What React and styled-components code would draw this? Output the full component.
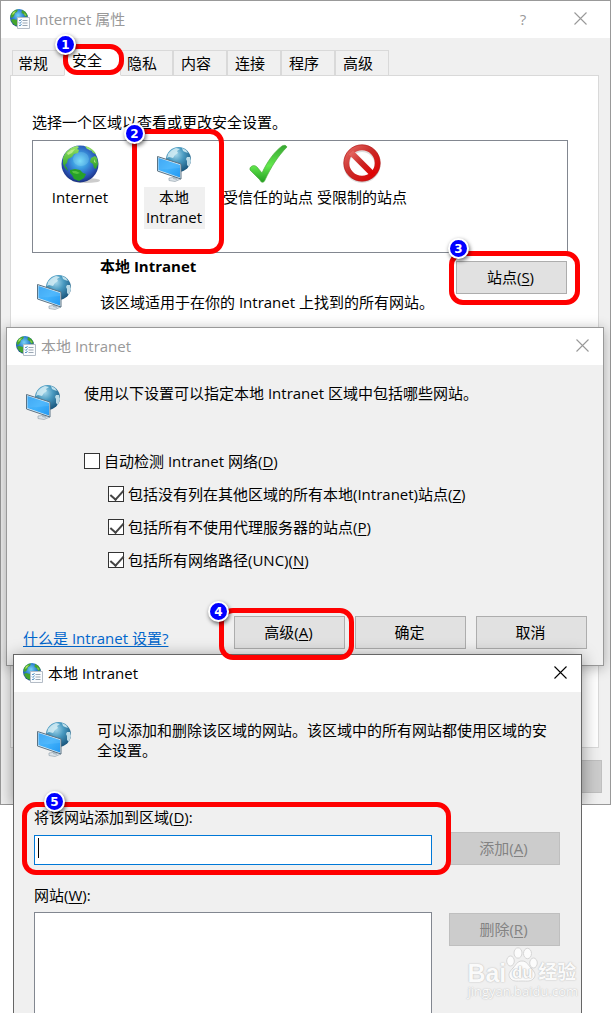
import React from 'react';
import styled, {createGlobalStyle} from 'styled-components';

const GlobalStyle = createGlobalStyle`
*{
    box-sizing:border-box;
}
body{
    margin:0;
    background:#ffffff;
    color:#000000;
    font-family:"Open Sans","Noto Sans CJK SC",sans-serif;
    font-size:15px;
    line-height:20px;
}
button,input{
    font:inherit;
    color:inherit;
}
u{
    text-underline-offset:2px;
    text-decoration-thickness:1px;
}
`

const zones = [
    {name: 'Internet', icon: <GlobeIcon />},
    {name: '本地 Intranet', icon: <NetworkIcon />, selected: true},
    {name: '受信任的站点', icon: <TickIcon />},
    {name: '受限制的站点', icon: <BlockedIcon />},
];

const tabs = ['常规', '安全', '隐私', '内容', '连接', '程序', '高级'];

const options = [
    {id: 'detect', text: '自动检测 Intranet 网络', hotkey: 'D', checked: false},
    {id: 'local', text: '包括没有列在其他区域的所有本地(Intranet)站点', hotkey: 'Z', checked: true},
    {id: 'proxy', text: '包括所有不使用代理服务器的站点', hotkey: 'P', checked: true},
    {id: 'unc', text: '包括所有网络路径(UNC)', hotkey: 'N', checked: true},
];

export default function App() {
    return (
        <Desktop>
            <GlobalStyle />
            <PropertiesWindow />
            <IntranetWindow />
            <SitesWindow />
        </Desktop>
    )
}

function PropertiesWindow() {
    return (
        <MainWindow>
            <WindowTitle title="Internet 属性" help />
            <PropertiesBody>
                <TabBar role="tablist">
                    {tabs.map((tab) => (
                        <Tab key={tab} role="tab" $active={tab === '安全'} aria-selected={tab === '安全'}>
                            {tab}
                            {tab === '安全' && <Callout number="1" $inset="-5px -4px 0 -2px" $top="-15px" $left="-13px" />}
                        </Tab>
                    ))}
                </TabBar>
                <TabPanel role="tabpanel">
                    <div>选择一个区域以查看或更改安全设置。</div>
                    <ZoneList>
                        {zones.map((zone) => (
                            <Zone key={zone.name}>
                                <ZoneIcon>{zone.icon}</ZoneIcon>
                                <ZoneName $selected={zone.selected}>{zone.name}</ZoneName>
                                {zone.selected && <Callout number="2" $inset="-12px -3px -2px 5px" $top="-11px" $left="-13px" />}
                            </Zone>
                        ))}
                    </ZoneList>
                    <ZoneInfo>
                        <SideIcon><NetworkIcon /></SideIcon>
                        <ZoneText>
                            <strong>本地 Intranet</strong>
                            <span>该区域适用于在你的 Intranet 上找到的所有网站。</span>
                        </ZoneText>
                        <SitesButton>
                            <Button>站点(<u>S</u>)</Button>
                            <Callout number="3" $inset="-10px -13px -11px -7px" $top="-18px" $left="-6px" />
                        </SitesButton>
                    </ZoneInfo>
                </TabPanel>
                <Footer>
                    <Button disabled aria-label="应用" />
                </Footer>
            </PropertiesBody>
        </MainWindow>
    )
}

function IntranetWindow() {
    return (
        <SettingsWindow>
            <WindowTitle title="本地 Intranet" />
            <SettingsBody>
                <SettingsIntro>
                    <IntroIcon><NetworkIcon /></IntroIcon>
                    <span>使用以下设置可以指定本地 Intranet 区域中包括哪些网站。</span>
                </SettingsIntro>
                <Options>
                    {options.map((option, i) => (
                        <Option key={option.id} $nested={i > 0}>
                            <Checkbox type="checkbox" defaultChecked={option.checked} />
                            <span>{option.text}(<u>{option.hotkey}</u>)</span>
                        </Option>
                    ))}
                </Options>
                <SettingsFooter>
                    <HelpLink href="#help">什么是 Intranet 设置?</HelpLink>
                    <Buttons>
                        <Holder>
                            <Button>高级(<u>A</u>)</Button>
                            <Callout number="4" $inset="-8px -9px -11px -15px" $top="-12px" $left="-16px" />
                        </Holder>
                        <Button>确定</Button>
                        <Button>取消</Button>
                    </Buttons>
                </SettingsFooter>
            </SettingsBody>
        </SettingsWindow>
    )
}

function SitesWindow() {
    return (
        <FrontWindow>
            <WindowTitle title="本地 Intranet" active />
            <SitesBody>
                <SitesIntro>
                    <IntroIcon><NetworkIcon /></IntroIcon>
                    <span>可以添加和删除该区域的网站。该区域中的所有网站都使用区域的安全设置。</span>
                </SitesIntro>
                <AddRow>
                    <Field>
                        <label htmlFor="site">将该网站添加到区域(<u>D</u>):</label>
                        <InputWrap>
                            <SiteInput id="site" type="text" />
                            <Caret />
                        </InputWrap>
                        <Callout number="5" $inset="-5px -19px -10px -12px" $top="-16px" $left="17px" />
                    </Field>
                    <Button disabled>添加(<u>A</u>)</Button>
                </AddRow>
                <SitesRow>
                    <SitesList>
                        <span id="sites-label">网站(<u>W</u>):</span>
                        <ListBox role="listbox" aria-labelledby="sites-label" />
                    </SitesList>
                    <RemoveButton disabled>删除(<u>R</u>)</RemoveButton>
                </SitesRow>
                <Watermark>
                    <WatermarkLogo>
                        <span>Bai</span>
                        <Paw><PawIcon /><PawText>du</PawText></Paw>
                        <WatermarkName>经验</WatermarkName>
                    </WatermarkLogo>
                    <WatermarkUrl>jingyan.baidu.com</WatermarkUrl>
                </Watermark>
            </SitesBody>
        </FrontWindow>
    )
}

function WindowTitle({title, active, help}) {
    return (
        <TitleBar $active={active} $help={help}>
            <TitleIcon />
            <TitleText>{title}</TitleText>
            {help && <TitleButton aria-label="帮助">?</TitleButton>}
            <TitleButton aria-label="关闭">
                <svg width="13" height="13" viewBox="0 0 13 13" fill="none" stroke="currentColor" strokeWidth="1.1">
                    <path d="M.5.5l12 12M12.5.5l-12 12" />
                </svg>
            </TitleButton>
        </TitleBar>
    )
}

function Callout({number, $inset, $top, $left}) {
    return (
        <Ring $inset={$inset}>
            <Badge $top={$top} $left={$left}>{number}</Badge>
        </Ring>
    )
}

function TitleIcon() {
    return (
        <svg width="20" height="20" viewBox="0 0 20 20">
            <defs>
                <radialGradient id="smallGlobe" cx=".45" cy=".35" r=".65">
                    <stop offset="0" stopColor="#79d3f5" />
                    <stop offset=".5" stopColor="#2b7fd0" />
                    <stop offset="1" stopColor="#173d83" />
                </radialGradient>
            </defs>
            <circle cx="9" cy="9" r="9" fill="url(#smallGlobe)" />
            <path d="M1 5c2-3 4-4.500 7-4.500L7 3 5 4 4 7 2 9 .5 8zM12 1c3 1 5 3 5.500 6l-2 1-2-3-2-1zM3 10l4 1 2 2-1 4c-3 0-6-3-7-6z" fill="#45a52e" />
            <path d="M3 3l3-1-2 3-2 1zM14 4l2 2-1 1z" fill="#a9dc60" />
            <path d="M7.500 8.500h12v11h-12z" fill="#fafcfe" stroke="#b4bcc6" />
            <path d="M12.500 11.500h5M12.500 14h5M12.500 16.500h5" stroke="#9ba7b4" />
            <path d="M9 11l1 1 1.500-2M9 13.500l1 1 1.500-2M9 16l1 1 1.500-2" fill="none" stroke="#2e7ab9" strokeWidth=".8" />
        </svg>
    )
}

function GlobeIcon() {
    return (
        <svg width="40" height="40" viewBox="-1 0 40 40">
            <defs>
                <radialGradient id="globe" cx=".5" cy=".42" r=".58">
                    <stop offset="0" stopColor="#6fd6f7" />
                    <stop offset=".35" stopColor="#3c9be0" />
                    <stop offset=".75" stopColor="#2a56b8" />
                    <stop offset="1" stopColor="#1a2f80" />
                </radialGradient>
                <linearGradient id="land" x1="0" y1="0" x2="0" y2="1">
                    <stop offset="0" stopColor="#9be36a" />
                    <stop offset=".5" stopColor="#5cc043" />
                    <stop offset="1" stopColor="#1f9425" />
                </linearGradient>
            </defs>
            <ellipse cx="25" cy="36.500" rx="14" ry="2.500" fill="#000" opacity=".2" />
            <circle cx="19" cy="20" r="18.500" fill="url(#globe)" />
            <path d="M2 14C4 8 9 3 16 2l2 1-2 2 2 1-1 3-4 1-2 3-4 2-1 4-2 2 2 3 1 3-3-3-2-4zM24 2c5 1 9 4 11 8l-3-1-2-3-4-1zM30 14l4-2 2 2 1 6-2 5-2-1-1-4-3-2z" fill="url(#land)" />
            <path d="M9 26l5-1 5 1 3 3 3 1-2 4-5 3-5-2-2-4-2-2z" fill="#27a128" />
            <path d="M11 27l4 0 4 2-3 1-4-1z" fill="#62cc45" opacity=".8" />
            <path d="M6 9l4-3 4-1-3 4-4 2zM27 4l4 3-3-1zM33 15l2 4-2-1z" fill="#c6f193" opacity=".8" />
            <ellipse cx="20" cy="15" rx="8" ry="7" fill="#b3f4ff" opacity=".2" />
        </svg>
    )
}

function NetworkIcon() {
    return (
        <svg width="36" height="36" viewBox="-1 -1 36 36">
            <defs>
                <radialGradient id="netGlobe" cx=".4" cy=".3" r=".7">
                    <stop offset="0" stopColor="#a3d6ea" />
                    <stop offset=".45" stopColor="#4899c0" />
                    <stop offset="1" stopColor="#1b587f" />
                </radialGradient>
                <linearGradient id="screen" x1="0" y1="0" x2="1" y2="1">
                    <stop offset="0" stopColor="#2c9df0" />
                    <stop offset=".5" stopColor="#41b2fc" />
                    <stop offset="1" stopColor="#2499f2" />
                </linearGradient>
            </defs>
            <circle cx="21.500" cy="12.500" r="12.500" fill="url(#netGlobe)" />
            <path d="M11 7c2-3 5-5 8-6l4 1-3 2 1 2-3 2-2 3-4-1-2 1zM25 1l4 2 2 3-3-1-2-1zM30 10l3 0 1 4-2 6-2-2 0-4-1-2z" fill="#d5edf4" opacity=".85" />
            <path d="M12 31l8-1 4 2-6 2.500-6-1z" fill="#dce4ea" stroke="#97a5af" strokeWidth=".7" />
            <path d="M16 28l5 2-1 3-4-1z" fill="#afbec8" />
            <path d="M.5 9.500L24 17v15L.5 24z" fill="#d9ecf8" stroke="#5a7283" strokeWidth="1" />
            <path d="M1.500 11L23 18v12.500L1.500 23z" fill="url(#screen)" />
            <path d="M1.500 11L23 18v3L1.500 23z" fill="#77caff" opacity=".28" />
        </svg>
    )
}

function TickIcon() {
    return (
        <svg width="40" height="40" viewBox="0 0 40 40">
            <defs>
                <linearGradient id="tick" x1="0" y1="0" x2="0" y2="1">
                    <stop offset="0" stopColor="#36a632" />
                    <stop offset=".55" stopColor="#63e84d" />
                    <stop offset="1" stopColor="#239d22" />
                </linearGradient>
            </defs>
            <path d="M2 24c2-3 5-3 7-1l5 6C19 18 26 8 34 2c2-1 4-1 5 1C30 12 23 23 17 36c-1 3-4 3-5 0L2 26z" fill="url(#tick)" stroke="#4cad3e" strokeWidth=".7" />
        </svg>
    )
}

function BlockedIcon() {
    return (
        <svg width="40" height="40" viewBox="0 0 40 40">
            <defs>
                <linearGradient id="blocked" x1="0" y1="0" x2="1" y2="1">
                    <stop offset="0" stopColor="#e46761" />
                    <stop offset=".45" stopColor="#c92a28" />
                    <stop offset="1" stopColor="#e00000" />
                </linearGradient>
            </defs>
            <circle cx="20" cy="20.500" r="15.500" fill="none" stroke="#777" strokeWidth="6" opacity=".25" />
            <circle cx="20" cy="19" r="15.500" fill="none" stroke="url(#blocked)" strokeWidth="5.500" />
            <path d="M9 8.500l22 22" stroke="url(#blocked)" strokeWidth="6" />
            <circle cx="20" cy="19" r="18.200" fill="none" stroke="#b51c1c" strokeWidth=".7" />
        </svg>
    )
}

function PawIcon() {
    return (
        <svg width="32" height="36" viewBox="0 0 32 36" fill="#fcfcfc" stroke="#d6d6d6" strokeWidth="1">
            <ellipse cx="4.500" cy="14" rx="3.800" ry="5" />
            <ellipse cx="12" cy="6" rx="4" ry="5.200" />
            <ellipse cx="21.500" cy="6.500" rx="4" ry="5.200" />
            <ellipse cx="27.500" cy="16" rx="3.800" ry="5" />
            <path d="M16 14c5 0 6 4 9 7 4 4 5 7 3 10-3 4-7 3-12 3s-9 1-12-3c-2-3-1-6 3-10 3-3 4-7 9-7z" />
        </svg>
    )
}

const Desktop = styled.main`
position:relative;
min-height:100vh;
overflow:hidden;
`
const Window = styled.section`
position:absolute;
background:#f0f0f0;
border:1px solid #999999;
`
const MainWindow = styled(Window)`
top:0;
left:0;
right:0;
`
const SettingsWindow = styled(Window)`
top:327px;
left:6px;
right:7px;
box-shadow:0 2px 12px rgba(0,0,0,0.3);
`
/* the shadow only falls on the windows behind, not on the page below them */
const FrontWindow = styled(Window)`
display:flex;
flex-direction:column;
top:654px;
left:13px;
right:29px;
bottom:0;
border-color:#666666;
border-bottom:0;
&:before{
    content:"";
    position:absolute;
    top:-1px;
    left:-1px;
    right:-1px;
    height:151px;
    pointer-events:none;
    box-shadow:0 3px 16px rgba(0,0,0,0.4);
    clip-path:inset(-24px -24px 0 -24px);
}
`
const TitleBar = styled.header`
display:flex;
align-items:center;
height:37px;
padding:0 ${props => props.$help ? "9px" : "0"} 2px 9px;
background:#ffffff;
color:${props => props.$active ? "#000000" : "#999999"};
`
const TitleText = styled.div`
flex:1;
padding-left:5px;
`
const TitleButton = styled.button`
display:flex;
align-items:center;
justify-content:center;
width:42px;
height:35px;
padding:0;
border:0;
background:transparent;
& + &{
    margin-left:15px;
}
`
const PropertiesBody = styled.div`
padding:10px 11px 11px 9px;
`
const TabBar = styled.div`
display:flex;
align-items:flex-end;
margin-bottom:-1px;
padding-left:2px;
`
const Tab = styled.button`
position:relative;
z-index:${props => props.$active ? "1" : "auto"};
width:${props => props.$active ? "57px" : "54px"};
height:${props => props.$active ? "28px" : "26px"};
margin:${props => props.$active ? "0 -2px" : "0"};
padding:0 0 ${props => props.$active ? "4px" : "0"} 7px;
border:1px solid #d9d9d9;
border-bottom-color:${props => props.$active ? "#ffffff" : "#d9d9d9"};
background:${props => props.$active ? "#ffffff" : "#f0f0f0"};
text-align:left;
& + &{
    border-left-width:${props => props.$active ? "1px" : "0"};
}
&:first-child{
    padding-left:5px;
}
`
const TabPanel = styled.div`
min-height:673px;
padding:36px 30px 0 21px;
background:#ffffff;
border:1px solid #d9d9d9;
`
const ZoneList = styled.ul`
display:flex;
min-height:113px;
margin:8px 0 0;
padding:0;
border:1px solid #828790;
list-style:none;
`
const Zone = styled.li`
position:relative;
display:flex;
flex-direction:column;
align-items:center;
width:94px;
padding-top:3px;
text-align:center;
`
const ZoneIcon = styled.div`
display:flex;
align-items:center;
justify-content:center;
height:40px;
margin-bottom:3px;
`
const ZoneName = styled.span`
max-width:${props => props.$selected ? "61px" : "none"};
padding-bottom:2px;
white-space:${props => props.$selected ? "normal" : "nowrap"};
background:${props => props.$selected ? "#f0f0f0" : "transparent"};
`
const ZoneInfo = styled.div`
display:flex;
align-items:flex-start;
padding-top:3px;
`
const SideIcon = styled.div`
display:flex;
margin:18px 28px 0 4px;
`
const ZoneText = styled.div`
display:flex;
flex-direction:column;
flex:1;
gap:16px;
white-space:nowrap;
`
const Holder = styled.div`
position:relative;
`
const SitesButton = styled(Holder)`
margin:5px 1px 0 0;
`
const Button = styled.button`
display:block;
width:111px;
height:33px;
padding:0 2px 2px 0;
border:1px solid #adadad;
background:#e1e1e1;
&:disabled{
    color:#838383;
    background:#cccccc;
    border-color:#bfbfbf;
}
`
const Footer = styled.div`
display:flex;
justify-content:flex-end;
margin:12px -3px 0 0;
`
const SettingsBody = styled.div`
padding:18px 16px 16px;
`
const SettingsIntro = styled.div`
display:flex;
gap:23px;
padding-left:2px;
`
const IntroIcon = styled.div`
display:flex;
flex-shrink:0;
padding-top:1px;
`
const Options = styled.div`
display:flex;
flex-direction:column;
gap:13px;
padding:31px 0 46px 61px;
`
const Option = styled.label`
display:flex;
align-items:center;
gap:4px;
margin-left:${props => props.$nested ? "24px" : "0"};
`
const Checkbox = styled.input`
appearance:none;
position:relative;
width:16px;
height:16px;
margin:0;
border:1px solid #333333;
background:#ffffff;
&:checked:after{
    content:"";
    position:absolute;
    top:0;
    left:4px;
    width:6px;
    height:11px;
    border:solid #444444;
    border-width:0 2px 2px 0;
    transform:rotate(42deg);
}
`
const SettingsFooter = styled.div`
display:flex;
align-items:flex-end;
justify-content:space-between;
`
const HelpLink = styled.a`
padding-bottom:1px;
color:#0066cc;
text-underline-offset:2px;
`
const Buttons = styled.div`
display:flex;
gap:10px;
`
const SitesBody = styled.div`
position:relative;
display:flex;
flex-direction:column;
flex:1;
padding:28px 21px 0 20px;
`
const SitesIntro = styled.div`
display:flex;
gap:25px;
padding-left:2px;
`
const AddRow = styled.div`
display:grid;
grid-template-columns:1fr 111px;
align-items:end;
gap:17px;
margin-top:47px;
`
const SitesRow = styled.div`
display:grid;
grid-template-columns:1fr 111px;
flex:1;
gap:17px;
margin-top:20px;
`
const Field = styled.div`
position:relative;
display:flex;
flex-direction:column;
gap:8px;
`
const InputWrap = styled.div`
position:relative;
display:flex;
`
const SiteInput = styled.input`
width:100%;
height:30px;
padding:0 4px;
border:1px solid #0078d7;
background:#ffffff;
outline:none;
`
const Caret = styled.span`
position:absolute;
top:3px;
left:4px;
width:1px;
height:20px;
background:#000000;
`
const SitesList = styled.div`
display:flex;
flex-direction:column;
gap:7px;
`
const ListBox = styled.div`
flex:1;
border:1px solid #828790;
border-bottom:0;
background:#ffffff;
`
const RemoveButton = styled(Button)`
margin-top:28px;
`
const Ring = styled.div`
position:absolute;
inset:${props => props.$inset};
z-index:2;
border:5px solid #ff0000;
border-radius:14px;
pointer-events:none;
`
const Badge = styled.span`
position:absolute;
top:${props => props.$top};
left:${props => props.$left};
display:flex;
align-items:center;
justify-content:center;
width:21px;
height:21px;
border:2px solid #ffffff;
border-radius:50%;
background:#0000ff;
color:#ffffff;
box-shadow:1px 2px 4px rgba(0,0,0,0.6);
font-family:"DejaVu Sans",sans-serif;
font-size:12px;
font-weight:bold;
`
const Watermark = styled.div`
position:absolute;
right:3px;
bottom:14px;
color:#fafafa;
text-shadow:0 0 1px #bbbbbb,0 0 2px #cccccc;
`
const WatermarkLogo = styled.div`
display:flex;
align-items:flex-end;
font-family:"Liberation Sans","Noto Sans CJK SC",sans-serif;
font-size:25px;
font-weight:bold;
`
const Paw = styled.span`
position:relative;
display:flex;
`
const PawText = styled.span`
position:absolute;
right:0;
bottom:2px;
left:0;
font-size:17px;
line-height:17px;
text-align:center;
text-shadow:0 0 1px #aaaaaa,0 0 2px #bbbbbb;
`
const WatermarkName = styled.span`
font-size:19px;
`
const WatermarkUrl = styled.div`
font-size:13px;
line-height:16px;
text-shadow:0 0 1px #bbbbbb,0 0 2px #d0d0d0;
`
